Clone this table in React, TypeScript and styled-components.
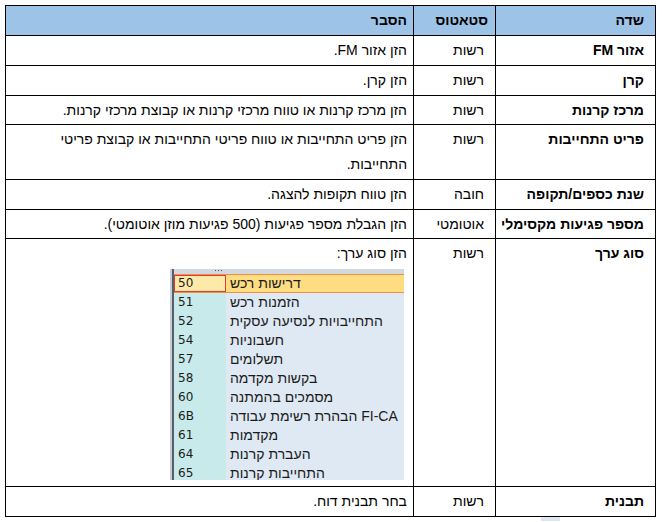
import React from 'react';
import styled, { createGlobalStyle } from 'styled-components';

const GlobalStyle = createGlobalStyle`
  html, body { margin: 0; padding: 0; background: #ffffff; }
  body { font-family: "Liberation Sans", Arial, "DejaVu Sans", sans-serif; }
`;

const Page = styled.div`
  width: 662px;
  height: 522px;
  box-sizing: border-box;
  padding: 5px 6px 0 5px;
  display: flex;
  flex-direction: column;
  overflow: hidden;
`;

const Table = styled.div`
  direction: rtl;
  width: 651px;
  box-sizing: border-box;
  border: 1px solid #000;
  font-size: 14px;
  color: #000;
`;

const Row = styled.div<{ $head?: boolean; $last?: boolean; $tight?: boolean }>`
  display: grid;
  grid-template-columns: 160px 82px 1fr;
  background: ${(p) => (p.$head ? '#9dc3e6' : '#ffffff')};
  border-bottom: ${(p) => (p.$last ? 'none' : '1px solid #000')};
  & > * {
    padding-bottom: ${(p) => (p.$tight ? '1px' : '2px')};
  }
`;

const Cell = styled.div<{ $pr: number; $bold?: boolean; $sep?: boolean }>`
  box-sizing: border-box;
  padding-top: 2px;
  padding-right: ${(p) => p.$pr}px;
  padding-left: 2px;
  line-height: 25px;
  font-weight: ${(p) => (p.$bold ? 700 : 400)};
  border-left: ${(p) => (p.$sep ? '1px solid #000' : 'none')};
  text-align: right;
  white-space: ${(p) => (p.$sep ? 'nowrap' : 'normal')};
`;

/* SAP value list picture */
const ListBox = styled.div`
  direction: ltr;
  width: 234px;
  height: 211px;
  margin: 3px 3px 4px auto;
  overflow: hidden;
  display: flex;
  flex-direction: column;
  border-left: 2px solid #c9cdd3;
  box-sizing: border-box;
  font-family: "DejaVu Sans", "Liberation Sans", sans-serif;
  font-size: 12px;
  color: #1b1b1b;
`;

const ListInner = styled.div`
  display: flex;
  flex-direction: column;
  border-left: 2px solid #56606c;
  flex: 1;
`;

const TopStrip = styled.div`
  height: 5px;
  flex: none;
  display: flex;
  background: #d3d8de;
`;

const StripNum = styled.div`
  width: 52px;
  display: flex;
  justify-content: flex-end;
  align-items: flex-start;
  padding: 1px 4px 0 0;
  box-sizing: border-box;
  gap: 2px;
`;

const Dot = styled.span`
  width: 1px;
  height: 1px;
  background: #4a4f57;
`;

const ListRow = styled.div<{ $sel?: boolean }>`
  display: flex;
  height: 19px;
  flex: none;
  box-sizing: border-box;
  border-top: ${(p) => (p.$sel ? '1px solid #ea9146' : 'none')};
  border-bottom: ${(p) => (p.$sel ? '1px solid #ea9146' : 'none')};
`;

const NumCell = styled.div<{ $sel?: boolean }>`
  width: 52px;
  flex: none;
  box-sizing: border-box;
  padding-left: 4px;
  display: flex;
  align-items: center;
  background: ${(p) => (p.$sel ? '#feeaa8' : '#c8eaea')};
  box-shadow: ${(p) => (p.$sel ? 'inset 0 0 0 1px #e2393a' : 'none')};
`;

const TextCell = styled.div<{ $sel?: boolean }>`
  flex: 1;
  box-sizing: border-box;
  padding-left: 4px;
  display: flex;
  align-items: center;
  white-space: nowrap;
  background: ${(p) => (p.$sel ? '#fddc82' : '#dee9f4')};
  font-family: "Liberation Sans", Arial, sans-serif;
  font-size: 14px;
`;

const Footer = styled.div`
  display: flex;
  padding-left: 536px;
`;

const Chip = styled.div`
  width: 19px;
  height: 4px;
  background: #dde6f2;
`;

const listItems: [string, string][] = [
  ['50', 'דרישות רכש'],
  ['51', 'הזמנות רכש'],
  ['52', 'התחייבויות לנסיעה עסקית'],
  ['54', 'חשבוניות'],
  ['57', 'תשלומים'],
  ['58', 'בקשות מקדמה'],
  ['60', 'מסמכים בהמתנה'],
  ['6B', 'הבהרת רשימת עבודה FI-CA'],
  ['61', 'מקדמות'],
  ['64', 'העברת קרנות'],
  ['65', 'התחייבות קרנות'],
];

const ValueList = () => (
  <ListBox>
    <ListInner>
      <TopStrip>
        <StripNum>
          <Dot />
          <Dot />
          <Dot />
        </StripNum>
      </TopStrip>
      {listItems.map(([n, t], i) => (
        <ListRow key={n} $sel={i === 0}>
          <NumCell $sel={i === 0}>{n}</NumCell>
          <TextCell $sel={i === 0}>{t}</TextCell>
        </ListRow>
      ))}
    </ListInner>
  </ListBox>
);

type RowData = { field: string; status: string; text: React.ReactNode; tight?: boolean };

const rows: RowData[] = [
  { field: 'אזור FM', status: 'רשות', text: 'הזן אזור FM.' },
  { field: 'קרן', status: 'רשות', text: 'הזן קרן.' },
  { field: 'מרכז קרנות', status: 'רשות', text: 'הזן מרכז קרנות או טווח מרכזי קרנות או קבוצת מרכזי קרנות.', tight: true },
  { field: 'פריט התחייבות', status: 'רשות', text: 'הזן פריט התחייבות או טווח פריטי התחייבות או קבוצת פריטי התחייבות.' },
  { field: 'שנת כספים/תקופה', status: 'חובה', text: 'הזן טווח תקופות להצגה.' },
  { field: 'מספר פגיעות מקסימלי', status: 'אוטומטי', text: 'הזן הגבלת מספר פגיעות (500 פגיעות מוזן אוטומטי).', tight: true },
  {
    field: 'סוג ערך',
    status: 'רשות',
    text: (
      <>
        הזן סוג ערך:
        <ValueList />
      </>
    ),
  },
  { field: 'תבנית', status: 'רשות', text: 'בחר תבנית דוח.' },
];

export default function App() {
  return (
    <>
      <GlobalStyle />
      <Page>
        <Table>
          <Row $head>
            <Cell $pr={11} $bold $sep>שדה</Cell>
            <Cell $pr={7} $bold $sep>סטאטוס</Cell>
            <Cell $pr={6} $bold>הסבר</Cell>
          </Row>
          {rows.map((r, i) => (
            <Row key={r.field} $last={i === rows.length - 1} $tight={r.tight}>
              <Cell $pr={11} $bold $sep>{r.field}</Cell>
              <Cell $pr={11} $sep>{r.status}</Cell>
              <Cell $pr={6}>{r.text}</Cell>
            </Row>
          ))}
        </Table>
        <Footer>
          <Chip />
        </Footer>
      </Page>
    </>
  );
}
